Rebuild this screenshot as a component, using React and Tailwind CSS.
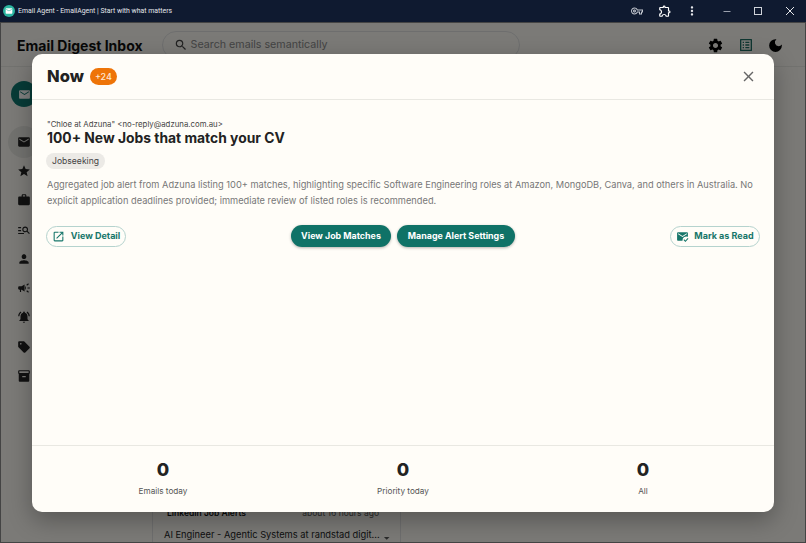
import React from "react";
import {
  MdEmail, MdStar, MdWork, MdManageSearch, MdPerson, MdCampaign, MdNotificationsActive, MdSell, MdInventory,
  MdSettings, MdListAlt, MdDarkMode, MdOpenInNew, MdMarkEmailRead, MdOutlineExtension, MdMoreVert, MdSearch,
  MdOutlineVpnKey, MdClose, MdArrowDropDown,
} from "react-icons/md";

const side = [MdStar, MdWork, MdManageSearch, MdPerson, MdCampaign, MdNotificationsActive, MdSell, MdInventory];

function Stat({ n, label }) {
  return (
    <div className="flex flex-col items-center">
      <div className="text-[18px] leading-[24px] font-extrabold text-[#222]">{n}</div>
      <div className="mt-[3px] text-[8.2px] leading-[12px] text-[#555]">{label}</div>
    </div>
  );
}

export default function App() {
  return (
    <div className="relative flex flex-col h-[543px] w-[806px] overflow-hidden font-['Inter',sans-serif] bg-[#f6f5ef]">
      <div className="flex h-[22px] shrink-0 items-center bg-[#0f1a30] pl-[3px] text-white">
        <div className="flex h-[12px] w-[12px] items-center justify-center rounded-full bg-[#2bb5a0]">
          <MdEmail className="text-[8px] text-white" />
        </div>
        <span className="ml-[3px] text-[6.9px] text-[#e5e7eb] font-['Roboto',sans-serif]">Email Agent - EmailAgent | Start with what matters</span>
        <div className="ml-auto flex items-center">
          <MdOutlineVpnKey className="mr-[15px] text-[12px] text-[#c4c8d0]" />
          <MdOutlineExtension className="mr-[13px] text-[14px] text-white" />
          <MdMoreVert className="mr-[23px] text-[14px] text-[#e5e7eb]" />
          <svg width="10" height="10" viewBox="0 0 10 10" className="mr-[21px]"><path d="M1.500 5.500h7" stroke="#9aa0ad" strokeWidth="1" /></svg>
          <svg width="10" height="10" viewBox="0 0 10 10" className="mr-[22px]"><rect x="1.500" y="1.500" width="7" height="7" fill="none" stroke="#cfd3da" strokeWidth="1" /></svg>
          <svg width="10" height="10" viewBox="0 0 10 10" className="mr-[11px]"><path d="M1 1l8 8M9 1l-8 8" stroke="#e5e7eb" strokeWidth="1" /></svg>
        </div>
      </div>

      <div className="flex h-[45px] shrink-0 items-center border-b border-[#e5e4de] pl-[17px] pr-[22px] pt-[2px]">
        <div className="text-[14px] font-bold text-[#111]">Email Digest Inbox</div>
        <div className="ml-[19px] flex h-[28px] w-[358px] items-center rounded-full border border-[#ddd] pl-[11px]">
          <MdSearch className="text-[14px] text-[#444]" />
          <span className="ml-[3px] text-[10.7px] text-[#888]">Search emails semantically</span>
        </div>
        <MdSettings className="ml-auto text-[17px] text-black" />
        <MdListAlt className="ml-[14px] text-[16px] text-[#1f6d62]" />
        <MdDarkMode className="ml-[13px] text-[17px] text-black" />
      </div>

      <div className="flex min-h-0 flex-1">
        <div className="flex w-[48px] shrink-0 flex-col items-center">
          <div className="mt-[14px] flex h-[26px] w-[26px] items-center justify-center rounded-full bg-[#0f766e]">
            <MdEmail className="text-[13px] text-white" />
          </div>
          <div className="mt-[19px] flex h-[32px] w-[32px] items-center justify-center rounded-full bg-[#e5e4de]">
            <MdEmail className="text-[14px] text-[#222]" />
          </div>
          <div className="mt-[6px] flex flex-col items-center gap-[15.3px]">
            {side.map((I, i) => <I key={i} className="text-[14px] text-[#222]" />)}
          </div>
        </div>
        <div className="ml-[104px] mt-auto h-[36px] w-[249px] border-x border-[#ddd] px-[11px] text-[8.5px]">
          <div className="flex justify-between pl-[3px] pr-[10px] font-semibold text-[#111]">
            <span>LinkedIn Job Alerts</span><span className="font-normal text-[#555]">about 16 hours ago</span>
          </div>
          <div className="mt-[5px] flex items-center text-[9.3px] text-[#222]">
            <span className="whitespace-nowrap">AI Engineer - Agentic Systems at randstad digit...</span>
            <MdArrowDropDown className="ml-auto -mr-[4px] mt-[6px] text-[14px] text-[#555]" />
          </div>
        </div>
      </div>

      <div className="absolute inset-x-0 bottom-0 top-[22px] bg-black/50 shadow-[inset_0_0_0_1px_#444]" />

      <div className="absolute left-[32px] top-[54px] flex h-[458px] w-[742px] flex-col rounded-[10px] bg-[#fffdf8] shadow-[0_8px_24px_rgba(0,0,0,0.3)]">
        <div className="flex h-[46px] shrink-0 items-center border-b border-[#e9e8e2] pl-[15px] pr-[17px]">
          <span className="text-[16.5px] font-extrabold text-[#222]">Now</span>
          <span className="ml-[6px] flex h-[17px] w-[27px] items-center justify-center rounded-full bg-[#ee7408] text-[9px] font-medium text-[#ffe8d2]">+24</span>
          <MdClose className="ml-auto text-[17px] text-[#666]" />
        </div>

        <div className="flex-1 px-[14px] pt-[18px]">
          <div className="pl-px text-[7.8px] leading-[12px] text-[#444]">"Chloe at Adzuna" &lt;no-reply@adzuna.com.au&gt;</div>
          <div className="-mt-[2px] pl-px text-[13.85px] leading-[20px] font-bold text-[#222]">100+ New Jobs that match your CV</div>
          <div className="mt-[5px] w-fit rounded-full bg-[#eceae6] px-[6px] py-[2px] text-[8.6px] leading-[12px] text-[#444]">Jobseeking</div>
          <p className="mt-[8px] pl-px text-[9.25px] leading-[16px] text-[#777]">
            Aggregated job alert from Adzuna listing 100+ matches, highlighting specific Software Engineering roles at Amazon, MongoDB, Canva, and others in Australia. No explicit application deadlines provided; immediate review of listed roles is recommended.
          </p>
          <div className="mt-[16px] grid grid-cols-[1fr_auto_1fr] items-center">
            <button className="flex h-[21px] w-[80px] items-center justify-center gap-[6px] rounded-full border border-[#b5d3ce] text-[9px] font-bold text-[#17766a]">
              <MdOpenInNew className="text-[13px]" />View Detail
            </button>
            <div className="flex gap-[6px]">
              <button className="flex h-[22px] w-[100px] items-center justify-center rounded-full bg-[#0f7267] text-[8.9px] font-bold text-white shadow-[0_1px_3px_rgba(0,0,0,0.3)]">View Job Matches</button>
              <button className="flex h-[22px] w-[118px] items-center justify-center rounded-full bg-[#0f7267] text-[8.9px] font-bold text-white shadow-[0_1px_3px_rgba(0,0,0,0.3)]">Manage Alert Settings</button>
            </div>
            <button className="flex h-[21px] w-[90px] items-center justify-center gap-[5px] justify-self-end rounded-full border border-[#b5d3ce] text-[9px] font-bold text-[#17766a]">
              <MdMarkEmailRead className="text-[13px]" />Mark as Read
            </button>
          </div>
        </div>

        <div className="grid h-[67px] shrink-0 grid-cols-3 border-t border-[#e9e8e2] px-[11px] pt-[12px]">
          <Stat n="0" label="Emails today" />
          <Stat n="0" label="Priority today" />
          <Stat n="0" label="All" />
        </div>
      </div>
    </div>
  );
}
